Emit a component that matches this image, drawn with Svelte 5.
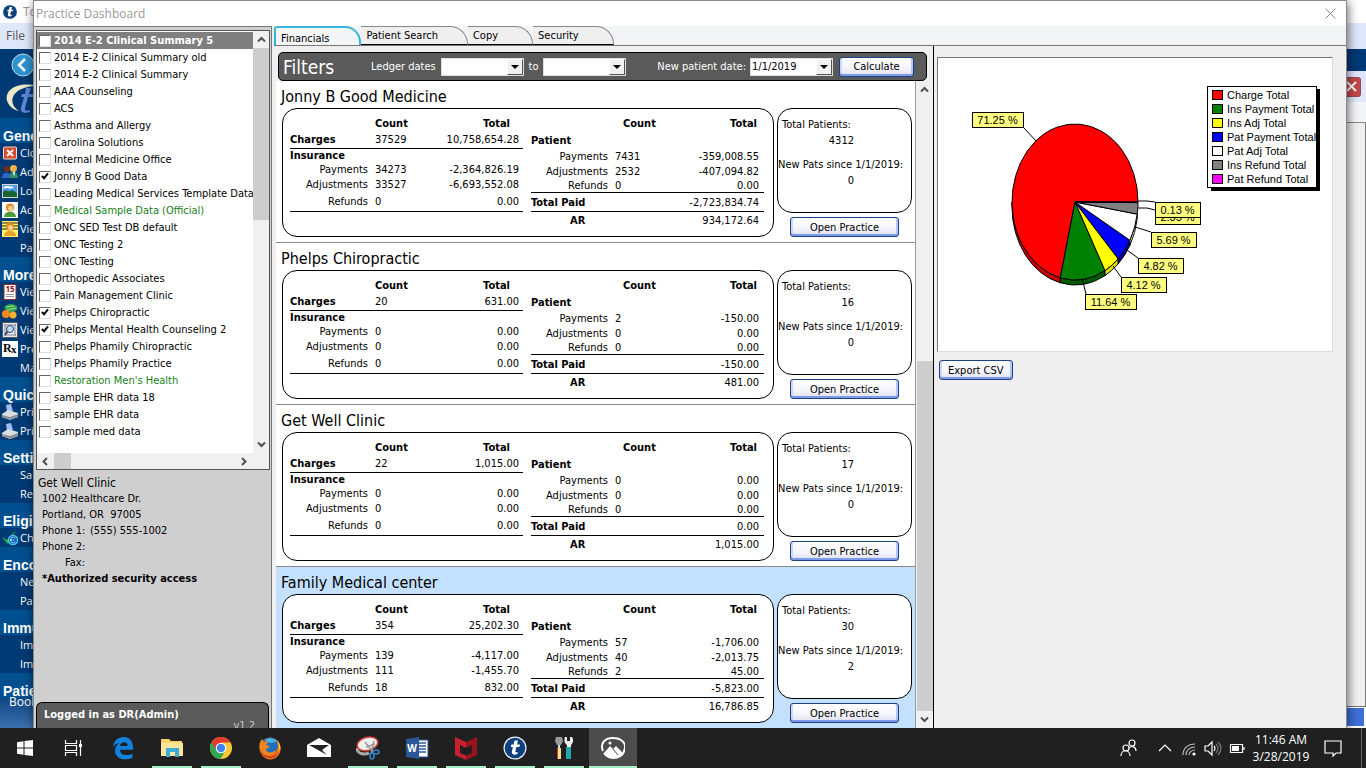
<script lang="ts">
  type Practice = {
    name: string;
    charges: [string, string];
    insurance: [string, string][];
    patient: [string, string][];
    paid: string;
    ar: string;
    total: string;
    fresh: string;
    selected?: boolean;
  };

  const labels = ['Payments', 'Adjustments', 'Refunds'];

  const databases = [
    { name: '2014 E-2 Clinical Summary 5', current: true },
    { name: '2014 E-2 Clinical Summary old' },
    { name: '2014 E-2 Clinical Summary' },
    { name: 'AAA Counseling' },
    { name: 'ACS' },
    { name: 'Asthma and Allergy' },
    { name: 'Carolina Solutions' },
    { name: 'Internal Medicine Office' },
    { name: 'Jonny B Good Data', checked: true },
    { name: 'Leading Medical Services Template Data' },
    { name: 'Medical Sample Data (Official)', green: true },
    { name: 'ONC SED Test DB default' },
    { name: 'ONC Testing 2' },
    { name: 'ONC Testing' },
    { name: 'Orthopedic Associates' },
    { name: 'Pain Management Clinic' },
    { name: 'Phelps Chiropractic', checked: true },
    { name: 'Phelps Mental Health Counseling 2', checked: true },
    { name: 'Phelps Phamily Chiropractic' },
    { name: 'Phelps Phamily Practice' },
    { name: "Restoration Men's Health", green: true },
    { name: 'sample EHR data 18' },
    { name: 'sample EHR data' },
    { name: 'sample med data' }
  ];

  const practices: Practice[] = [
    {
      name: 'Jonny B Good Medicine',
      charges: ['37529', '10,758,654.28'],
      insurance: [['34273', '-2,364,826.19'], ['33527', '-6,693,552.08'], ['0', '0.00']],
      patient: [['7431', '-359,008.55'], ['2532', '-407,094.82'], ['0', '0.00']],
      paid: '-2,723,834.74',
      ar: '934,172.64',
      total: '4312',
      fresh: '0'
    },
    {
      name: 'Phelps Chiropractic',
      charges: ['20', '631.00'],
      insurance: [['0', '0.00'], ['0', '0.00'], ['0', '0.00']],
      patient: [['2', '-150.00'], ['0', '0.00'], ['0', '0.00']],
      paid: '-150.00',
      ar: '481.00',
      total: '16',
      fresh: '0'
    },
    {
      name: 'Get Well Clinic',
      charges: ['22', '1,015.00'],
      insurance: [['0', '0.00'], ['0', '0.00'], ['0', '0.00']],
      patient: [['0', '0.00'], ['0', '0.00'], ['0', '0.00']],
      paid: '0.00',
      ar: '1,015.00',
      total: '17',
      fresh: '0'
    },
    {
      name: 'Family Medical center',
      charges: ['354', '25,202.30'],
      insurance: [['139', '-4,117.00'], ['111', '-1,455.70'], ['18', '832.00']],
      patient: [['57', '-1,706.00'], ['40', '-2,013.75'], ['2', '45.00']],
      paid: '-5,823.00',
      ar: '16,786.85',
      total: '30',
      fresh: '2',
      selected: true
    }
  ];

  const menu = [
    { title: 'Gene', items: [['close', 'Clo'], ['people', 'Ad'], ['image', 'Loa'], ['person', 'Ac'], ['card', 'Vie'], ['', 'Pa']] },
    { title: 'More', items: [['cal', 'Vie'], ['money', 'Vie'], ['search', 'Vie'], ['rx', 'Pre'], ['', 'Ma']] },
    { title: 'Quick', items: [['printer', 'Pri'], ['printer', 'Pri']] },
    { title: 'Settin', items: [['', 'Sa'], ['', 'Re']] },
    { title: 'Eligib', items: [['check', 'Ch']] },
    { title: 'Encou', items: [['', 'Ne'], ['', 'Pa']] },
    { title: 'Immu', items: [['', 'Im'], ['', 'Im']] },
    { title: 'Patie', items: [] }
  ];

  const tabs = ['Financials', 'Patient Search', 'Copy', 'Security'];
  let activeTab = 'Financials';

  // pie geometry
  const cx = 137;
  const cy = 144;
  const rx = 63;
  const ry = 78;
  const depth = 5;

  const slices = [
    { label: 'Charge Total', pct: 71.25, color: '#ff0000', side: '#c80000' },
    { label: 'Ins Payment Total', pct: 11.64, color: '#008000', side: '#005a00' },
    { label: 'Ins Adj Total', pct: 4.12, color: '#ffff00', side: '#e0e000' },
    { label: 'Pat Payment Total', pct: 4.82, color: '#0000ff', side: '#0000a0' },
    { label: 'Pat Adj Total', pct: 5.69, color: '#ffffff', side: '#ffffff' },
    { label: 'Ins Refund Total', pct: 2.35, color: '#808080', side: '#606060' },
    { label: 'Pat Refund Total', pct: 0.13, color: '#ff00ff', side: '#a000a0' }
  ];

  const callouts = [
    { text: '71.25 %', x: 34, y: 54, w: 51, line: '86,70 98,83' },
    { text: '2.35 %', x: 217, y: 151, w: 45, line: '200,150 209,150 217,152' },
    { text: '0.13 %', x: 217, y: 144, w: 45, line: '200,143 209,143 217,144' },
    { text: '5.69 %', x: 213, y: 174, w: 45, line: '197,169 213,174' },
    { text: '4.82 %', x: 200, y: 200, w: 45, line: '189,192 200,200' },
    { text: '4.12 %', x: 183, y: 219, w: 45, line: '175,208 183,219' },
    { text: '11.64 %', x: 147, y: 236, w: 51, line: '144,220 148,236' }
  ];

  function point(pct: number, dy = 0) {
    const a = (pct / 100) * Math.PI * 2;
    return `${(cx + rx * Math.cos(a)).toFixed(1)},${(cy - ry * Math.sin(a) + dy).toFixed(1)}`;
  }

  let start = 0;
  const pie = slices.map((s) => {
    const from = start;
    const to = start + s.pct;
    start = to;
    const big = s.pct > 50 ? 1 : 0;
    const rim = Math.max(from, 50);
    return {
      ...s,
      top: `M${cx},${cy} L${point(from)} A${rx},${ry} 0 ${big} 0 ${point(to)} Z`,
      wall: `M${point(rim)} A${rx},${ry} 0 0 0 ${point(to)} L${point(to, depth)} A${rx},${ry} 0 0 1 ${point(rim, depth)} Z`
    };
  });

  const apps = [
    { id: 'start', name: 'Start' },
    { id: 'tasks', name: 'Task View' },
    { id: 'edge', name: 'Edge' },
    { id: 'folder', name: 'File Explorer', open: true },
    { id: 'chrome', name: 'Chrome', open: true },
    { id: 'firefox', name: 'Firefox' },
    { id: 'mail', name: 'Mail' },
    { id: 'snip', name: 'Snipping Tool', open: true },
    { id: 'word', name: 'Word', open: true },
    { id: 'shield', name: 'McAfee', open: true },
    { id: 'tdisc', name: 'Practice', open: true },
    { id: 'tools', name: 'Tools', open: true },
    { id: 'photo', name: 'Photos', open: true, active: true }
  ];
</script>

{#snippet arrow(dir: string)}
  <svg class="arrow" width="9" height="9" viewBox="0 0 9 9" aria-hidden="true">
    <path
      d={{ up: 'M1 6.500 4.500 3 8 6.500', down: 'M1 2.500 4.500 6 8 2.500', left: 'M6 1 2.500 4.500 6 8', right: 'M3 1 6.500 4.500 3 8' }[dir]}
      fill="none"
      stroke="#505050"
      stroke-width="2"
    />
  </svg>
{/snippet}

{#snippet tlogo(size: number)}
  <svg width={size} height={size} viewBox="0 0 24 24" aria-hidden="true">
    <circle cx="12" cy="12" r="11.500" fill="#e8eef6" />
    <circle cx="12" cy="12" r="10.300" fill="#0d3f7c" />
    <path d="M11.500 4.500h3.500l-1 4h3l-.6 2.400h-3l-1 4.300c-.3 1.300.6 1.500 2.400.7l-.4 2c-3 1.500-6.200.8-5.500-2.600l1-4.400H7.800l.6-2.400h2.100z" fill="#fff" />
  </svg>
{/snippet}

{#snippet sideIcon(id: string)}
  <svg width="16" height="16" viewBox="0 0 16 16" aria-hidden="true">
    {#if id === 'close'}
      <rect x="1.500" y="2" width="13" height="12" rx="1" fill="#d9492b" stroke="#f3d9d2" />
      <path d="M5 5l6 6M11 5l-6 6" stroke="#fff" stroke-width="2" />
    {:else if id === 'people'}
      <circle cx="4.500" cy="5" r="3" fill="#7a2c18" />
      <path d="M0 14c0-7 9-7 9 0z" fill="#2f62d0" />
      <circle cx="11.500" cy="4.500" r="3.500" fill="#f1b04c" />
      <path d="M7 14c0-8 9-8 9 0z" fill="#2f8f64" />
      <path d="M11 8l1 5 1-5z" fill="#fff" />
    {:else if id === 'image'}
      <rect x=".5" y="1.500" width="15" height="13" fill="#4d9be6" stroke="#d6d6d6" />
      <path d="M1 9c4-4 6 2 9-2l5 3v4H1z" fill="#17642c" />
      <path d="M2 5c3-3 6 1 9-1" stroke="#fff" fill="none" stroke-width="2" />
    {:else if id === 'person' || id === 'card'}
      <rect width="16" height="16" fill={id === 'card' ? '#fff36b' : '#fff'} />
      {#if id === 'card'}<path d="M0 2h16M0 5h16M0 8h16" stroke="#222" />{/if}
      <circle cx="8" cy="5.500" r="4" fill="#e08a28" />
      <circle cx="8.500" cy="6.500" r="2.500" fill="#f9cf91" />
      <path d="M2 15c0-7 12-7 12 0z" fill={id === 'card' ? '#eaa22c' : '#4c9c38'} />
    {:else if id === 'cal'}
      <rect x="2" y=".5" width="12" height="15" fill="#fff" stroke="#8d3038" />
      <text x="8" y="8" font-size="8" font-weight="bold" text-anchor="middle" fill="#8d1010">15</text>
      <path d="M4 10.500h8M4 12.500h8" stroke="#999" />
    {:else if id === 'money'}
      <ellipse cx="9" cy="5" rx="6.500" ry="4" fill="#2fa34a" />
      <path d="M4 4l8-1M5 7l9-2" stroke="#9fe39f" />
      <circle cx="4" cy="11" r="4" fill="#f28a1c" />
      <circle cx="11" cy="12" r="3.500" fill="#f7b02f" />
    {:else if id === 'search'}
      <rect x=".5" y=".5" width="15" height="15" fill="#e8e8e8" stroke="#556" />
      <path d="M2 3h12M2 13h12M3 2v12M13 2v12" stroke="#88a" />
      <circle cx="8" cy="7" r="3.500" fill="#b9dcf7" stroke="#346" />
      <path d="M5.500 9.500L3 13" stroke="#346" stroke-width="2" />
    {:else if id === 'rx'}
      <rect width="16" height="16" fill="#fff" />
      <text x="1" y="11" font-size="12" font-weight="bold" font-family="Liberation Serif, serif">R</text>
      <text x="9" y="12" font-size="11" font-weight="bold" font-family="Liberation Serif, serif">x</text>
    {:else if id === 'printer'}
      <path d="M4 1l5-1 2 7-6 1z" fill="#9ebcf2" />
      <path d="M0 10l6-4 10 3v4l-8 3-8-3z" fill="#dadde2" />
      <path d="M0 11l8 2 8-3v3l-8 3-8-3z" fill="#8c9198" />
    {:else if id === 'check'}
      <path d="M0 7l5 3L14 0 6 14z" fill="#18c52a" />
      <circle cx="11" cy="10" r="4.500" fill="#0d4fa8" stroke="#46c4f5" stroke-width="1.500" />
      <path d="M13.500 8.500c-1-2-5-1.500-5 1.500s4 3.500 5 1.500M8.500 10h4" fill="none" stroke="#9be6ff" />
    {/if}
  </svg>
{/snippet}

{#snippet appIcon(id: string)}
  {#if id === 'tdisc'}
    {@render tlogo(24)}
  {:else}
    <svg width="24" height="24" viewBox="0 0 24 24" aria-hidden="true">
      {#if id === 'start'}
        <path d="M4 6.200l6.500-.9v6.200H4zM11.500 5.100L20 4v7.500h-8.500zM4 12.500h6.500v6.200L4 17.800zM11.500 12.500H20V20l-8.500-1.100z" fill="#fff" />
      {:else if id === 'tasks'}
        <path d="M3.500 4v3.500h11V4M3.500 20v-3.500h11V20M3.500 9.500h11v5h-11zM18.500 4v16" fill="none" stroke="#fff" stroke-width="1.200" />
        <path d="M17 8h3v3h-3z" fill="#fff" />
      {:else if id === 'edge'}
        <path
          d="M2 11.200C2.800 4.600 7.300 1 12.500 1 18.800 1 22 5.700 22 11v2.700H9c.2 4 3.300 5.300 6.400 5.300 2.300 0 4.400-.6 6-1.600v4.300c-2 1-4.400 1.600-7.200 1.600C8 23.300 4 19.500 4 14.700c0-3.400 1.800-6.300 4.800-7.800C5.700 7.200 3.500 8.700 2 11.200zM9 10.100h7.700c0-2.500-1.300-3.900-3.600-3.900-2.200 0-3.800 1.600-4.100 3.900z"
          fill="#0f82e0"
        />
      {:else if id === 'folder'}
        <path d="M1 3h8l2 2h11v15H1z" fill="#f7d56b" />
        <path d="M1 7h22v13H1z" fill="#fce69b" />
        <path d="M6 12h13v9h-4v-5h-5v5H6z" fill="#3fa9d8" />
      {:else if id === 'chrome'}
        <circle cx="12" cy="12" r="11" fill="#fcc934" />
        <path d="M12 12L2.500 6.500A11 11 0 0 1 21.500 6.500H12z" fill="#e33b2e" />
        <path d="M2.500 6.500A11 11 0 0 0 11.500 23L16.500 14.500 12 12z" fill="#33a852" />
        <path d="M2.500 6.500L7.500 15 12 12 12 6.500z" fill="#e33b2e" />
        <path d="M2.500 6.500L7.300 14.700 12 17.500 9 22.500A11 11 0 0 1 2.500 6.500z" fill="#33a852" />
        <circle cx="12" cy="12" r="5.300" fill="#fff" />
        <circle cx="12" cy="12" r="4.200" fill="#3f83f1" />
      {:else if id === 'firefox'}
        <circle cx="12" cy="12" r="10.500" fill="#e2601c" />
        <circle cx="12" cy="9.500" r="8" fill="#1f6fc0" />
        <path d="M7 4c4-3 9-2 12 1-3 2-7 2-9 1z" fill="#45b6ea" />
        <path d="M1.500 12C1 8 2 5 4 3l1.500 3c1.500-1 3-1 5-.5L8 9l3.500 1c0 2-2 2-3.500 3 0 3 3 4 6 3 2-.5 2.500-2 4-1.500-1 2-3 4-6 4 5 1 9-3 8-9l-1-4c3 2 4.500 6 3.500 9-1 5-5 9-10.500 9S2 18 1.500 12z" fill="#ee8420" />
        <path d="M19 4c3 3 4 8 2 11 0-4 0-8-2-11z" fill="#fbd13a" />
        <path d="M2 12c1 5 5 8 10 8 4 0 7-2 9-5-1 5-5 7.500-9 7.500C6 22.500 2 18 2 12z" fill="#d9431b" />
      {:else if id === 'mail'}
        <path d="M0 9l12-7 12 7v12H0z" fill="#fff" />
        <path d="M2 9h20l-7 5 5 5-9-5z" fill="#222" />
      {:else if id === 'snip'}
        <path d="M1 12c0 6 7 7 12 5" stroke="#a9a9a9" stroke-width="3" fill="none" />
        <ellipse cx="11.500" cy="8" rx="10.500" ry="6.500" fill="#f1eeee" stroke="#d23c33" stroke-width="1.500" transform="rotate(-14 11 8)" />
        <path d="M9 6l8 10M18 5l-3 13M10 11l9-3" stroke="#999" stroke-width="1.500" />
        <ellipse cx="16" cy="20" rx="2" ry="3" fill="none" stroke="#2d8ccf" stroke-width="1.500" />
        <ellipse cx="20" cy="16" rx="3" ry="2" fill="none" stroke="#2d8ccf" stroke-width="1.500" />
      {:else if id === 'word'}
        <path d="M13 4h10v17H13z" fill="#fff" stroke="#2b579a" />
        <path d="M14 7h7M14 10h7M14 13h7M14 16h7" stroke="#2b579a" stroke-width="1.300" />
        <path d="M1 3l13-2v22L1 21z" fill="#2b579a" />
        <text x="7" y="16" font-size="10" font-weight="bold" text-anchor="middle" fill="#fff">W</text>
      {:else if id === 'shield'}
        <path d="M1 1l11 5v6l-6-3v8l6 2.500V24L1 19z" fill="#c8202f" />
        <path d="M23 1L12 6v6l6-3v8l-6 2.500V24l11-5z" fill="#96141d" />
      {:else if id === 'tools'}
        <path d="M4 1h6l1 4-2 4H5L3 5z" fill="#9a9a9a" />
        <path d="M6 9h2v5H6z" fill="#ddd" />
        <path d="M5 12h4v11H5z" fill="#f2e38c" />
        <path d="M5 12h1v11H5z" fill="#d33" />
        <path d="M13 1h2v4h3V1h2c2 3 1 6-1 8v4h-4V9c-3-2-3-5-2-8z" fill="#eee" />
        <path d="M14 11h5v12h-5z" fill="#23a7a7" />
      {:else if id === 'photo'}
        <path d="M2 15C-1 8 3 2 12 2c8 0 13 5 12 10-1 6-5 10-12 10-4 0-7-2-9-5" fill="none" stroke="#fff" stroke-width="2" />
        <path d="M3 17l6-7 3 3 3-3 7 7-4 4H7z" fill="#fff" />
        <circle cx="9" cy="7" r="1.500" fill="#fff" />
        <path d="M12 13l5 6" stroke="#444" />
      {/if}
    </svg>
  {/if}
{/snippet}

<div class="desktop">
  <div class="workspace">
    <div class="app-window">
      <div class="app-title">{@render tlogo(16)}<span>To</span></div>
      <div class="app-menu"><span>File</span></div>
      <div class="app-body">
        <nav class="side">
          <div class="side-top">
            <svg width="34" height="70" viewBox="0 0 34 70" aria-hidden="true">
              <circle cx="23" cy="16" r="11" fill="#2f93d0" stroke="#b9dcee" />
              <path d="M25 10l-6 6 6 6" fill="none" stroke="#fff" stroke-width="2.500" />
              <path d="M33 36C13 33 3 44 8 54c2 4 6 7 11 8C9 56 8 40 33 37z" fill="#ece9c6" />
              <path d="M26 39h5l-2 6h4v3h-5l-3 11c-1 3 2 3 5 2v2c-6 2-10 0-9-4l3-11h-3l1-3h3z" fill="#5f86d8" />
            </svg>
          </div>
          {#each menu as group}
            <h3>{group.title}</h3>
            <ul>
              {#each group.items as [icon, text]}
                <li>{@render sideIcon(icon)}<a href="#{text}">{text}</a></li>
              {/each}
            </ul>
          {/each}
          <span class="book">Book</span>
        </nav>
        <div class="app-right">
          <div class="strip-blue"></div>
          <div class="strip-pale">
            <svg width="22" height="20" viewBox="0 0 22 20" aria-hidden="true">
              <rect x=".5" y=".5" width="20" height="19" rx="2" fill="#c4484a" stroke="#8e4a55" />
              <path d="M7 5l9 9M16 5l-9 9" stroke="#fff" stroke-width="2" />
            </svg>
          </div>
          <div class="strip-tabs"></div>
          <div class="canvas"></div>
          <div class="status"></div>
        </div>
      </div>
    </div>

    <div class="dialog">
      <header class="dialog-title">
        <span>Practice Dashboard</span>
        <button class="close" aria-label="Close">
          <svg width="11" height="11" viewBox="0 0 11 11" aria-hidden="true">
            <path d="M.5.500l10 10M10.500.500l-10 10" stroke="#888" />
          </svg>
        </button>
      </header>

      <div class="dialog-body">
        <aside class="left">
          <div class="db-list">
            <ul>
              {#each databases as db}
                <li class:current={db.current} class:green={db.green}>
                  <label><input type="checkbox" checked={db.checked} />{db.name}</label>
                </li>
              {/each}
            </ul>
            <div class="vscroll">
              {@render arrow('up')}
              <div class="thumb"></div>
              {@render arrow('down')}
            </div>
            <div class="hscroll">
              {@render arrow('left')}
              <div class="thumb"></div>
              {@render arrow('right')}
            </div>
          </div>
          <address>
            <h2>Get Well Clinic</h2>
            <p>1002 Healthcare Dr.</p>
            <p>Portland, OR&nbsp; 97005</p>
            <dl>
              <dt>Phone 1:</dt><dd>(555) 555-1002</dd>
              <dt>Phone 2:</dt><dd></dd>
              <dt>Fax:</dt><dd></dd>
            </dl>
            <p><strong>*Authorized security access</strong></p>
          </address>
          <footer>
            <strong>Logged in as DR(Admin)</strong>
            <span>v1.2</span>
          </footer>
        </aside>

        <main>
          <div class="tabs" role="tablist">
            {#each tabs as tab}
              <button role="tab" aria-selected={tab === activeTab} class:active={tab === activeTab} on:click={() => (activeTab = tab)}>{tab}</button>
            {/each}
          </div>

          <div class="content">
            <section class="financials">
              <form class="filters">
                <h1>Filters</h1>
                <label for="from">Ledger dates</label>
                <div class="combo"><select id="from"><option></option></select><span></span></div>
                <label for="to">to</label>
                <div class="combo"><select id="to"><option></option></select><span></span></div>
                <label class="since" for="since">New patient date:</label>
                <div class="combo"><select id="since"><option>1/1/2019</option></select><span></span></div>
                <button type="button" class="xp">Calculate</button>
              </form>

              <div class="results">
                <div class="practices">
                  {#each practices as p}
                    <article class:selected={p.selected}>
                      <h2>{p.name}</h2>
                      <div class="cards">
                        <div class="card money">
                          <table>
                            <thead>
                              <tr><th></th><th class="count">Count</th><th class="total">Total</th></tr>
                            </thead>
                            <tbody>
                              <tr class="charges"><th>Charges</th><td>{p.charges[0]}</td><td>{p.charges[1]}</td></tr>
                              <tr class="r15"><th colspan="3">Insurance</th></tr>
                              {#each p.insurance as [count, total], i}
                                <tr class={['r13', 'r16', 'last'][i]}><td>{labels[i]}</td><td>{count}</td><td>{total}</td></tr>
                              {/each}
                            </tbody>
                          </table>
                          <table class="pat">
                            <thead>
                              <tr><th></th><th class="count">Count</th><th class="total">Total</th></tr>
                            </thead>
                            <tbody>
                              <tr><th colspan="3">Patient</th></tr>
                              {#each p.patient as [count, total], i}
                                <tr class={['r15', 'r15', 'r13 line'][i]}><td>{labels[i]}</td><td>{count}</td><td>{total}</td></tr>
                              {/each}
                              <tr class="last"><th colspan="2">Total Paid</th><td>{p.paid}</td></tr>
                              <tr><th class="ar">AR</th><td></td><td>{p.ar}</td></tr>
                            </tbody>
                          </table>
                        </div>
                        <div class="side-col">
                          <div class="card people">
                            <p class="inset">Total Patients:</p>
                            <p class="num">{p.total}</p>
                            <p class="gap">New Pats since 1/1/2019:</p>
                            <p class="num">{p.fresh}</p>
                          </div>
                          <button class="xp">Open Practice</button>
                        </div>
                      </div>
                    </article>
                  {/each}
                </div>
                <div class="vscroll">
                  {@render arrow('up')}
                  <div class="thumb"></div>
                  {@render arrow('down')}
                </div>
              </div>
            </section>

            <section class="summary">
              <div class="chart">
                <svg width="393" height="292" viewBox="0 0 393 292" role="img" aria-label="Totals by type">
                  {#each pie.filter((s) => s.pct > 3) as s}
                    <path d={s.wall} fill={s.side} stroke="#000" />
                  {/each}
                  {#each pie as s}
                    <path d={s.top} fill={s.color} stroke="#000" />
                  {/each}
                  {#each callouts as c}
                    <polyline points={c.line} fill="none" stroke="#000" />
                    <rect x={c.x + 0.5} y={c.y + 0.5} width={c.w} height="15" fill="#ffff80" stroke="#000" />
                    <text x={c.x + c.w / 2} y={c.y + 12} text-anchor="middle">{c.text}</text>
                  {/each}
                  <rect x="273" y="31" width="109" height="102" fill="#000" />
                  <rect x="269.500" y="28.500" width="109" height="101" fill="#fff" stroke="#000" />
                  {#each slices as s, i}
                    <rect x="274.500" y={32.5 + i * 14} width="10" height="9" fill={s.color} stroke="#000" />
                    <text x="289" y={41 + i * 14}>{s.label}</text>
                  {/each}
                </svg>
              </div>
              <button class="xp">Export CSV</button>
            </section>
          </div>
        </main>
      </div>
    </div>
  </div>

  <div class="taskbar">
    {#each apps as app}
      <button class="app" class:open={app.open} class:active={app.active} aria-label={app.name}>{@render appIcon(app.id)}</button>
    {/each}
    <div class="tray">
      <svg width="120" height="24" viewBox="0 0 120 24" fill="none" stroke="#fff" stroke-width="1.200" aria-hidden="true">
        <circle cx="5" cy="12" r="3" />
        <path d="M0 20c0-7 9-7 9 0" />
        <circle cx="11" cy="7" r="3" />
        <path d="M8 12c3-3 7-1 7 3" />
        <path d="M38 15l6-6 6 6" />
        <path d="M62 19c0-7 5-11 12-11M65 19c0-5 4-8 9-8M68 19c0-3 3-5 6-5" stroke="#bbb" />
        <circle cx="73" cy="18" r="1" fill="#fff" />
        <path d="M84 10h3l4-4v13l-4-4h-3z" />
        <path d="M93 10q2 2 0 5" />
        <path d="M95 8q4 4 0 9M97 6q6 6 0 13" stroke="#777" />
        <path d="M109.500 8.500h12v8h-12zM123 11v3" />
        <path d="M111 10h7v5h-7z" fill="#fff" stroke="none" />
      </svg>
      <time>11:46 AM<br />3/28/2019</time>
      <svg width="18" height="18" viewBox="0 0 18 18" fill="none" stroke="#fff" stroke-width="1.200" aria-hidden="true">
        <path d="M1 2h16v12h-5l-3 3v-3H1z" />
      </svg>
    </div>
    <div class="peek"></div>
  </div>
</div>

<style>
  :global(body) {
    margin: 0;
    overflow: hidden;
  }

  .desktop {
    height: 100vh;
    display: flex;
    flex-direction: column;
    font: 11px/16px 'DejaVu Sans Condensed', 'Noto Sans', sans-serif;
    color: #000;
  }

  .workspace {
    flex: 1;
    min-height: 0;
    position: relative;
    overflow: hidden;
  }

  h1, h2, h3, p, ul, dl, dd {
    margin: 0;
    padding: 0;
    font-weight: normal;
    list-style: none;
  }

  button, select, input {
    font: inherit;
    margin: 0;
  }

  /* window behind */
  .app-window {
    height: 100%;
    display: flex;
    flex-direction: column;
    background: #fff;
    font-family: 'Open Sans', sans-serif;
    font-size: 12px;
  }

  .app-title {
    height: 23px;
    display: flex;
    align-items: center;
    gap: 5px;
    padding-left: 2px;
    color: #999;
  }

  .app-menu {
    height: 26px;
    padding-left: 6px;
    line-height: 26px;
    background: #dfe8fa;
    color: #555;
  }

  .app-body {
    flex: 1;
    min-height: 0;
    display: flex;
  }

  .side {
    width: 180px;
    background: linear-gradient(#003a75 640px, #3d6fae);
    color: #fff;
  }

  .side-top {
    height: 69px;
  }

  .side h3 {
    height: 25px;
    padding: 10px 0 0 3px;
    box-sizing: border-box;
    line-height: 16px;
    font-weight: bold;
    font-family: 'Liberation Sans', Arial, sans-serif;
    background: #005090;
  }

  .side li {
    height: 19px;
    display: flex;
    align-items: center;
    gap: 2px;
    padding-left: 2px;
    color: #fff;
    font-size: 11px;
  }

  .side a {
    color: #fff;
    text-decoration: none;
  }

  .book {
    display: block;
    padding-left: 9px;
    line-height: 8px;
  }

  .app-right {
    flex: 1;
    display: flex;
    flex-direction: column;
  }

  .strip-blue {
    height: 22px;
    background: #003a75;
  }

  .strip-pale {
    height: 31px;
    display: flex;
    justify-content: flex-end;
    align-items: center;
    padding-right: 4px;
    box-sizing: border-box;
    background: #dfe8fa;
  }

  .strip-tabs {
    height: 20px;
    background: #f4f5f8;
    border-bottom: 1px solid #888;
  }

  .canvas {
    flex: 1;
    background: #f0f0f0;
    border-right: 1px solid #777;
    border-bottom: 1px solid #777;
  }

  .status {
    height: 18px;
    margin: 1px 2px 2px 0;
    background: #3f6fd9;
  }

  /* dialog */
  .dialog {
    position: absolute;
    inset: 0 19px 0 33px;
    display: flex;
    flex-direction: column;
    background: #efefef;
    border: 1px solid #888;
    border-bottom: 0;
    box-shadow: 1px 2px 10px rgba(0, 0, 0, 0.6);
  }

  .dialog-title {
    height: 25px;
    display: flex;
    justify-content: space-between;
    align-items: center;
    padding: 0 10px 0 2px;
    background: #fff;
    color: #999;
    font-family: 'Open Sans', sans-serif;
    font-size: 12px;
  }

  .close {
    display: flex;
    padding: 0;
    border: 0;
    background: none;
  }

  .dialog-body {
    flex: 1;
    min-height: 0;
    display: flex;
  }

  .left {
    width: 238px;
    display: flex;
    flex-direction: column;
    padding: 3px 0 0 2px;
    box-sizing: border-box;
    background: #cfcfcf;
    border-top: 1px solid #777;
    border-right: 1px solid #777;
  }

  .db-list {
    display: grid;
    grid-template-columns: 1fr 16px;
    grid-template-rows: 422px 16px;
    border: 1px solid #555;
    margin-right: 1px;
    background: #fff;
  }

  .db-list ul {
    overflow: hidden;
    padding: 1px 0;
  }

  .db-list li {
    height: 17px;
    line-height: 17px;
    white-space: nowrap;
  }

  .db-list label {
    display: flex;
    align-items: center;
    gap: 3px;
    padding-left: 2px;
  }

  .db-list .current {
    background: #7f7f7f;
    color: #fff;
    font-weight: bold;
  }

  .green {
    color: #168020;
  }

  input[type='checkbox'] {
    appearance: none;
    position: relative;
    flex: none;
    width: 12px;
    height: 12px;
    background: #fff;
    border: 1px solid;
    border-color: #666 #ddd #ddd #666;
  }

  input[type='checkbox']:checked::after {
    content: '';
    position: absolute;
    left: 3px;
    top: 0;
    width: 2px;
    height: 5px;
    border: solid #000;
    border-width: 0 2px 2px 0;
    transform: rotate(40deg);
  }

  .arrow {
    display: block;
    flex: none;
  }

  .vscroll,
  .hscroll {
    display: flex;
    align-items: center;
    background: #f0f0f0;
  }

  .vscroll {
    flex-direction: column;
    justify-content: space-between;
    padding: 4px 0;
  }

  .hscroll {
    grid-column: 1 / -1;
    padding: 0 21px 0 4px;
  }

  .thumb {
    background: #cdcdcd;
  }

  .db-list .vscroll .thumb {
    width: 16px;
    height: 172px;
    margin: 4px 0 auto;
  }

  .hscroll .thumb {
    width: 17px;
    height: 16px;
    margin: 0 auto 0 4px;
  }

  address {
    flex: 1;
    padding: 6px 0 0 6px;
    font-style: normal;
  }

  address h2 {
    margin-left: -4px;
    font-size: 12px;
    line-height: 15px;
  }

  dl {
    display: grid;
    grid-template-columns: 43px 1fr;
    grid-auto-rows: 16px;
    column-gap: 5px;
  }

  dt {
    text-align: right;
    white-space: nowrap;
  }

  .left footer {
    height: 26px;
    box-sizing: border-box;
    margin-right: 2px;
    padding: 4px 13px 0 7px;
    display: flex;
    flex-direction: column;
    line-height: 16px;
    overflow: hidden;
    background: #5a5a5a;
    color: #fff;
    border: 1px solid #000;
    border-bottom: 0;
    border-radius: 6px 6px 0 0;
  }

  .left footer span {
    align-self: flex-end;
    line-height: 6px;
    color: #ccc;
  }

  main {
    flex: 1;
    min-width: 0;
    display: flex;
    flex-direction: column;
    padding-left: 2px;
  }

  .tabs {
    display: flex;
    align-items: flex-end;
    height: 19px;
    background: #f3f4f6;
    border-bottom: 1px solid #777;
  }

  .tabs button {
    height: 19px;
    padding: 0 34px 0 5px;
    text-align: left;
    background: #efefef;
    border: 1px solid #888;
    border-bottom-color: #000;
    border-left: 0;
    border-radius: 0 18px 0 0;
  }

  .tabs button:nth-child(2) {
    padding-right: 29px;
  }

  .tabs .active {
    padding: 3px 30px 0 5px;
    background: #f4f5f7;
    border: 2px solid #35b5da;
    border-bottom: 0;
    border-radius: 3px 16px 0 0;
  }

  .content {
    flex: 1;
    min-height: 0;
    display: flex;
  }

  .financials {
    flex: none;
    width: 659px;
    display: flex;
    flex-direction: column;
    padding-top: 6px;
    border-right: 1px solid #000;
  }

  .filters {
    height: 29px;
    box-sizing: border-box;
    display: grid;
    grid-template-columns: 88px 70px 83px 19px 83px 124px 83px 75px;
    align-items: center;
    flex: none;
    margin: 0 6px 0 4px;
    padding-left: 4px;
    background: #5a5a5a;
    border: 1px solid #000;
    border-radius: 5px;
    color: #fff;
    white-space: nowrap;
  }

  .filters h1 {
    font-size: 19px;
    line-height: 26px;
  }

  .filters label[for='to'] {
    text-align: center;
  }

  .since {
    text-align: right;
    padding-right: 4px;
  }

  .filters .xp {
    margin-left: 6px;
    margin-right: -6px;
  }

  .combo {
    position: relative;
    height: 18px;
  }

  .combo select {
    width: 100%;
    height: 18px;
    padding: 0 1px;
    display: block;
    appearance: none;
    border: 1px solid #ddd;
    border-radius: 0;
    background: #fff;
    color: #000;
  }

  .combo span {
    position: absolute;
    right: 1px;
    top: 1px;
    width: 14px;
    height: 14px;
    background: #f0f0f0;
    border: 1px solid;
    border-color: #fff #555 #555 #fff;
    pointer-events: none;
  }

  .combo span::after {
    content: '';
    position: absolute;
    left: 3px;
    top: 5px;
    border: 4px solid transparent;
    border-top-color: #000;
    border-bottom: 0;
  }

  .xp {
    height: 20px;
    padding: 1px 8px 0;
    white-space: nowrap;
    line-height: 16px;
    border: 1px solid #1d3f86;
    border-radius: 3px;
    background: linear-gradient(#fff, #f3f3fb 60%, #dcdff2);
    box-shadow: inset 0 -2px 0 #7d9be8, inset 2px 0 0 #cdd9f8, inset -2px 0 0 #b5c7f4;
    color: #000;
  }

  .results {
    flex: 1;
    min-height: 0;
    display: flex;
    padding-left: 2px;
  }

  .practices {
    flex: 1;
    overflow: hidden;
    background: #fff;
    border-right: 1px solid #999;
  }

  .results .vscroll {
    width: 17px;
  }

  .results .thumb {
    width: 16px;
    height: 350px;
    margin: auto 0 4px;
  }

  article {
    height: 162px;
    box-sizing: border-box;
    padding: 5px 3px 0 6px;
    border-bottom: 1px solid #888;
    background: #fff;
  }

  .selected {
    background: #c3e0ff;
  }

  article h2 {
    margin-left: -1px;
    font-size: 16px;
    line-height: 22px;
  }

  .cards {
    display: flex;
    justify-content: space-between;
  }

  .card {
    box-sizing: border-box;
    background: #fff;
    border: 1px solid #000;
    border-radius: 15px;
  }

  .money {
    display: flex;
    justify-content: space-between;
    align-items: flex-start;
    width: 492px;
    height: 129px;
    padding: 6px 9px 0 7px;
  }

  .side-col {
    width: 135px;
    display: flex;
    flex-direction: column;
  }

  .side-col .xp {
    margin: 4px 13px;
  }

  .people {
    height: 105px;
    padding-top: 8px;
    white-space: nowrap;
  }

  .people .inset {
    padding-left: 4px;
  }

  .people .gap {
    margin-top: 8px;
  }

  .people .num {
    text-align: right;
    padding-right: 57px;
  }

  table {
    width: 233px;
    table-layout: fixed;
    border-collapse: collapse;
    line-height: 13px;
  }

  th, td {
    padding: 0;
    text-align: left;
    white-space: nowrap;
  }

  tr {
    height: 17px;
  }

  tr th:first-child {
    width: 85px;
  }

  .pat tr th:first-child {
    width: 84px;
  }

  .count {
    width: 56px;
  }

  th {
    font-weight: bold;
  }

  td:last-child,
  .total {
    text-align: right;
    padding-right: 4px;
  }

  .total {
    padding-right: 13px;
  }

  .pat td:last-child {
    padding-right: 5px;
  }

  .pat .total {
    padding-right: 7px;
  }

  .pat .count {
    padding-left: 8px;
  }

  td:first-child {
    text-align: right;
    padding-right: 7px;
  }

  .charges,
  .line,
  .last {
    border-bottom: 1px solid #000;
  }

  .charges,
  .r16 {
    height: 16px;
  }

  .r13 {
    height: 13px;
  }

  .r15 {
    height: 15px;
  }

  .last {
    height: 19px;
  }

  .ar {
    padding-left: 39px;
  }

  .summary {
    flex: 1;
    min-width: 0;
    padding: 11px 13px 0 3px;
  }

  .chart {
    height: 293px;
    background: #fff;
    border: 1px solid;
    border-color: #777 #ddd #ddd #777;
    font-family: 'Liberation Sans', Arial, sans-serif;
  }

  .chart svg {
    display: block;
  }

  .summary .xp {
    margin: 8px 2px;
  }

  /* taskbar */
  .taskbar {
    height: 40px;
    display: flex;
    gap: 1px;
    padding-left: 1px;
    background: #202020;
    color: #fff;
    font-family: 'Open Sans', sans-serif;
    font-size: 12px;
  }

  .app {
    width: 48px;
    display: flex;
    align-items: center;
    justify-content: center;
    padding: 0;
    border: 0;
    background: none;
    color: #fff;
  }

  .app.open {
    background: linear-gradient(#a4efc6, #a4efc6) center bottom / 40px 2px no-repeat;
  }

  .app.active {
    background-color: #4c4c4c;
    background-size: 48px 2px;
  }

  .tray {
    margin-left: auto;
    display: flex;
    align-items: center;
    gap: 10px;
    padding-right: 18px;
  }

  .tray svg {
    overflow: visible;
  }

  .tray time {
    width: 60px;
    text-align: center;
    line-height: 17px;
    margin-right: 3px;
  }

  .peek {
    width: 4px;
    border-left: 1px solid #666;
  }
</style>
